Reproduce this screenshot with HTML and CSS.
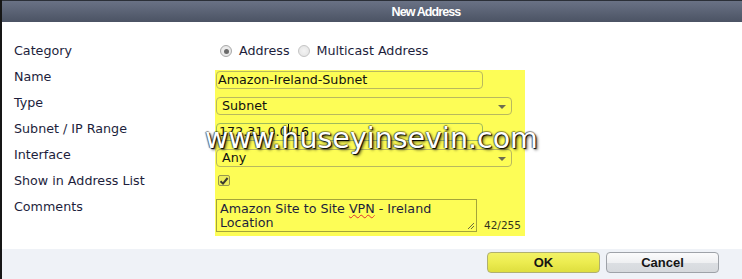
FILE: index.html
```html
<!DOCTYPE html>
<html>
<head>
<meta charset="utf-8">
<link rel="stylesheet" href="styles.css">
</head>
<body>
<div class="dialog">
  <div class="header"><span class="title">New Address</span></div>
  <div class="body">
    <div class="labels">
      <div class="label">Category</div>
      <div class="label">Name</div>
      <div class="label">Type</div>
      <div class="label">Subnet / IP Range</div>
      <div class="label">Interface</div>
      <div class="label">Show in Address List</div>
      <div class="label">Comments</div>
    </div>
    <div class="values">
      <div class="category">
        <span class="radio checked"></span><span class="rlabel">Address</span>
        <span class="radio"></span><span class="rlabel">Multicast Address</span>
      </div>
      <div class="highlight">
        <div class="row"><div class="input name">Amazon-Ireland-Subnet</div></div>
        <div class="row"><div class="select">Subnet<span class="arrow"></span></div></div>
        <div class="row"><div class="input focus">172.31.0.0<span class="caret"></span>/16</div></div>
        <div class="row"><div class="select">Any<span class="arrow"></span></div></div>
        <div class="row"><span class="checkbox"><svg width="10" height="10" viewBox="0 0 10 10"><path d="M1.5 5.2 L4 7.6 L8.6 2" fill="none" stroke="#3a3a30" stroke-width="2"/></svg></span></div>
        <div class="row comments">
          <div class="textarea">Amazon Site to Site <span class="spell">VPN</span> - Ireland<br>Location<svg class="grip" width="9" height="9" viewBox="0 0 9 9"><path d="M8 2 L2 8 M8 5 L5 8" stroke="#6a6a40" stroke-width="1"/></svg></div>
          <span class="counter">42/255</span>
        </div>
      </div>
    </div>
    <div class="watermark">www.huseyinsevin.com</div>
  </div>
  <div class="footer">
    <button class="btn ok">OK</button>
    <button class="btn cancel">Cancel</button>
  </div>
</div>
</body>
</html>
```
FILE: styles.css
```css
html, body {
  margin: 0;
  padding: 0;
}
body {
  width: 742px;
  height: 279px;
  overflow: hidden;
  background: #fff;
  font-family: "DejaVu Sans", Verdana, sans-serif;
}
.dialog {
  height: 279px;
  box-sizing: border-box;
  border-left: 2px solid #161616;
  display: flex;
  flex-direction: column;
}
.header {
  height: 22px;
  box-sizing: border-box;
  border-top: 1px solid #2b2f37;
  background: linear-gradient(#6a7285, #4b5364);
  display: flex;
  align-items: center;
  justify-content: center;
  padding-left: 108px;
}
.title {
  color: #fff;
  font-family: "Liberation Sans", Arial, sans-serif;
  font-weight: bold;
  font-size: 12.5px;
  letter-spacing: -0.9px;
  margin-top: 1px;
}
.body {
  flex: 1;
  position: relative;
  display: flex;
  padding-left: 12px;
}
.labels {
  width: 201px;
  padding-top: 19px;
}
.label {
  height: 26px;
  box-sizing: border-box;
  padding-top: 2px;
  font-size: 12.7px;
  line-height: 16px;
  color: #1d1e3c;
}
.values {
  padding-top: 19px;
}
.category {
  height: 29px;
  box-sizing: border-box;
  padding-top: 2px;
  display: flex;
  align-items: flex-start;
  font-size: 12.7px;
  line-height: 16px;
  color: #1d1e3c;
}
.radio {
  width: 12px;
  height: 12px;
  box-sizing: border-box;
  border-radius: 50%;
  border: 1px solid #c4c4c4;
  background: radial-gradient(#f4f4f4, #e2e2e2);
  margin-top: 2px;
  margin-left: 5px;
  margin-right: 7px;
  display: flex;
  align-items: center;
  justify-content: center;
}
.radio.checked {
  border-color: #a8a8a8;
}
.radio.checked::after {
  content: "";
  width: 5px;
  height: 5px;
  border-radius: 50%;
  background: #6b6b6b;
}
.rlabel {
  margin-right: 3px;
}
.highlight {
  width: 310px;
  background: #fdfd56;
  padding-top: 1px;
  padding-bottom: 1px;
}
.row {
  height: 26px;
  padding-left: 1px;
}
.input, .select {
  height: 18px;
  box-sizing: border-box;
  border: 1px solid #b9b95e;
  border-radius: 4px;
  font-size: 12.7px;
  line-height: 16px;
  color: #111;
  white-space: nowrap;
}
.input {
  width: 267px;
  padding-left: 1px;
}
.input.focus {
  border-color: #9fba5c;
  padding-left: 2px;
}
.caret {
  display: inline-block;
  width: 1px;
  height: 14px;
  background: #111;
  vertical-align: -2px;
}
.select {
  width: 296px;
  padding-left: 5px;
  position: relative;
  display: flex;
  align-items: center;
  justify-content: space-between;
  padding-right: 5px;
}
.arrow {
  width: 0;
  height: 0;
  border-left: 4px solid transparent;
  border-right: 4px solid transparent;
  border-top: 4px solid #6d6d50;
  margin-top: 1px;
}
.checkbox {
  display: flex;
  align-items: center;
  justify-content: center;
  width: 12px;
  height: 11px;
  box-sizing: border-box;
  border: 1px solid #96964e;
  border-radius: 2px;
  background: #ecec5a;
  margin-left: 2px;
}
.row.comments {
  height: 34px;
  display: flex;
  align-items: flex-end;
}
.textarea {
  position: relative;
  width: 261px;
  height: 33px;
  box-sizing: border-box;
  margin-top: -2px;
  align-self: flex-start;
  border: 1px solid #a4a43a;
  padding: 2px 0 0 3px;
  font-size: 12.7px;
  line-height: 13.5px;
  color: #1d1e3c;
}
.spell {
  text-decoration: underline wavy #e03030;
  text-decoration-thickness: 1px;
  text-underline-offset: 1px;
}
.grip {
  position: absolute;
  right: 1px;
  bottom: 1px;
}
.counter {
  font-size: 10.5px;
  line-height: 13px;
  color: #33331c;
  margin-left: 7px;
  margin-bottom: 3px;
}
.watermark {
  position: absolute;
  left: 203px;
  top: 102px;
  font-size: 28.5px;
  line-height: 29px;
  color: #fff;
  white-space: nowrap;
  text-shadow: 1px 1px 1px #000, -1px 0 1px rgba(0,0,0,0.55), 0 -1px 1px rgba(0,0,0,0.4), 2px 2px 3px rgba(0,0,0,0.6);
  pointer-events: none;
}
.footer {
  height: 30px;
  box-sizing: border-box;
  background: #eff2f7;
  display: flex;
  justify-content: flex-end;
  align-items: flex-start;
  padding-top: 3px;
  padding-right: 23px;
  gap: 6px;
}
.btn {
  width: 113px;
  height: 21px;
  box-sizing: border-box;
  font-family: "Liberation Sans", Arial, sans-serif;
  font-weight: bold;
  font-size: 13px;
  color: #151515;
  padding: 0;
  border-radius: 4px;
}
.btn.ok {
  border: 1px solid #b0b070;
  background: linear-gradient(#f2f266 0%, #ecec50 50%, #dede3e 100%);
}
.btn.cancel {
  border: 1px solid #9ea2a8;
  background: linear-gradient(#fbfbfc 0%, #eff0f2 50%, #dcdfe3 51%, #d6d9dd 100%);
}
```
